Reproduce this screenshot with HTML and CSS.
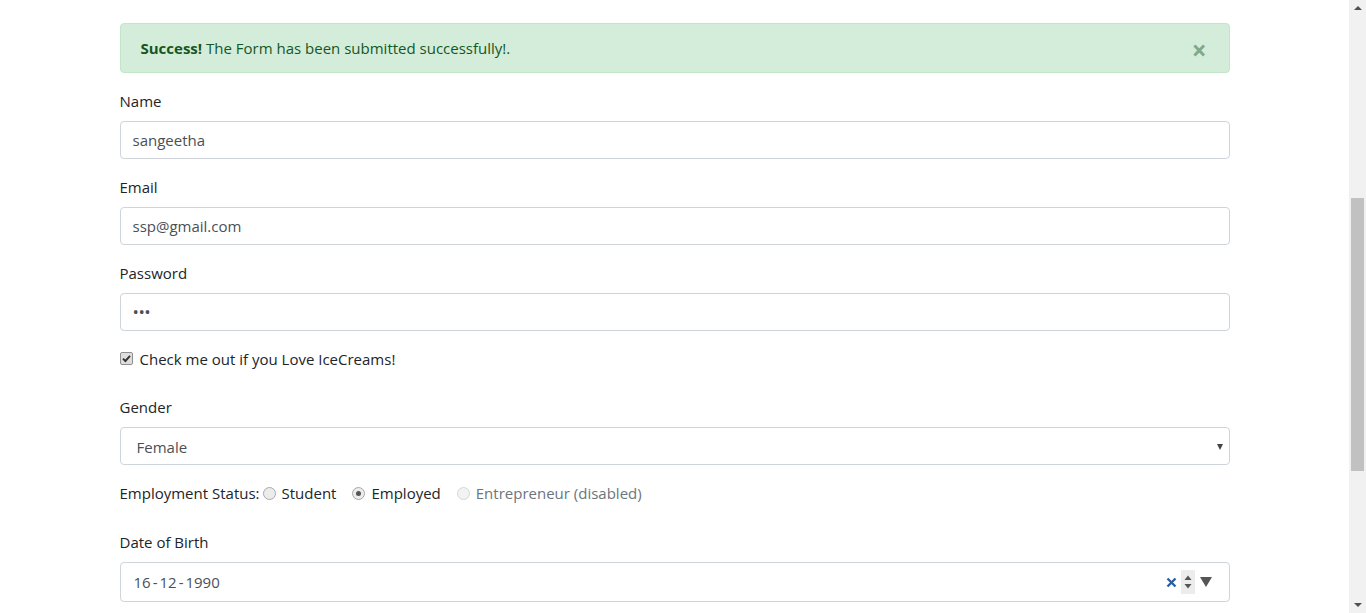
FILE: index.html
```html
<!DOCTYPE html>
<html lang="en">
<head>
<meta charset="utf-8">
<title>Form</title>
<link rel="stylesheet" href="styles.css">
</head>
<body>
<div class="page">
  <div class="container">
    <div class="alert">
      <span><strong>Success!</strong> The Form has been submitted successfully!.</span>
      <span class="close">&times;</span>
    </div>

    <div class="form-group">
      <label class="label">Name</label>
      <div class="input">sangeetha</div>
    </div>
    <div class="form-group">
      <label class="label">Email</label>
      <div class="input">ssp@gmail.com</div>
    </div>
    <div class="form-group">
      <label class="label">Password</label>
      <div class="input dots">&bull;&bull;&bull;</div>
    </div>

    <div class="check-row">
      <span class="checkbox">
        <svg width="9" height="9" viewBox="0 0 9 9"><path d="M1 4.6 L3.4 7 L8 1.8" fill="none" stroke="#333" stroke-width="1.9"/></svg>
      </span>
      <span>Check me out if you Love IceCreams!</span>
    </div>

    <div class="form-group">
      <label class="label">Gender</label>
      <div class="input select"><span>Female</span><span class="caret"></span></div>
    </div>

    <div class="radio-row">
      <span class="radio-label">Employment Status:</span>
      <span class="radio-item"><span class="radio"></span><span>Student</span></span>
      <span class="radio-item"><span class="radio checked"></span><span>Employed</span></span>
      <span class="radio-item disabled"><span class="radio"></span><span>Entrepreneur (disabled)</span></span>
    </div>

    <div class="form-group">
      <label class="label">Date of Birth</label>
      <div class="input date">
        <span>16<span class="sep">-</span>12<span class="sep">-</span>1990</span>
        <span class="date-tools">
          <svg class="clear" width="11" height="11" viewBox="0 0 11 11"><path d="M1.5 1.5 L9.5 9.5 M9.5 1.5 L1.5 9.5" stroke="#2f5fa3" stroke-width="2.4"/></svg>
          <span class="spin">
            <svg width="8" height="5" viewBox="0 0 8 5"><path d="M0.5 5 L4 0.5 L7.5 5 Z" fill="#555"/></svg>
            <svg width="8" height="5" viewBox="0 0 8 5"><path d="M0.5 0 L4 4.5 L7.5 0 Z" fill="#555"/></svg>
          </span>
          <svg class="drop" width="12" height="10" viewBox="0 0 12 10"><path d="M0 0 L12 0 L6 10 Z" fill="#555"/></svg>
        </span>
      </div>
    </div>
  </div>
</div>

<div class="scrollbar">
  <span class="arrow up"></span>
  <span class="thumb"></span>
  <span class="arrow down"></span>
</div>
</body>
</html>
```

FILE: styles.css
```css
html, body {
  margin: 0;
  padding: 0;
  height: 100%;
  overflow: hidden;
}
body {
  font-family: "Open Sans", "Noto Sans", sans-serif;
  font-size: 15px;
  line-height: 24px;
  color: #212529;
  background: #fff;
}
.page {
  margin-right: 17px;
  padding-top: 23px;
}
.container {
  width: 1110px;
  margin: 0 auto;
}
.alert {
  display: flex;
  justify-content: space-between;
  align-items: center;
  height: 48px;
  padding: 0 20px;
  border: 1px solid #c3e6cb;
  border-radius: 4px;
  background: #d4edda;
  color: #155724;
  margin-bottom: 16px;
}
.alert strong { font-weight: 700; }
.close {
  font-size: 26px;
  font-weight: 700;
  color: #80a98b;
  margin-right: 2px;
  padding-top: 4px;
}
.form-group {
  margin-bottom: 16px;
}
.label {
  display: block;
  margin-bottom: 8px;
}
.input {
  box-sizing: border-box;
  height: 38px;
  border: 1px solid #ced4da;
  border-radius: 4px;
  padding: 0 12px;
  display: flex;
  align-items: center;
  color: #495057;
}
.dots {
  font-size: 17px;
  letter-spacing: -0.5px;
}
.check-row {
  display: flex;
  align-items: center;
  height: 24px;
  margin-bottom: 24px;
}
.checkbox {
  box-sizing: border-box;
  width: 13px;
  height: 13px;
  border: 1px solid #8f8f8f;
  border-radius: 2px;
  background: #dedede;
  display: flex;
  align-items: center;
  justify-content: center;
  margin-right: 7px;
  margin-top: -2px;
}
.select {
  justify-content: space-between;
  padding-left: 16px;
  padding-right: 6px;
  padding-top: 1px;
}
.caret {
  width: 0;
  height: 0;
  border-left: 3.5px solid transparent;
  border-right: 3.5px solid transparent;
  border-top: 6px solid #444;
}
.radio-row {
  display: flex;
  align-items: center;
  height: 24px;
  margin-bottom: 25px;
}
.radio-label { margin-right: 3px; }
.radio-item {
  display: flex;
  align-items: center;
  margin-right: 16px;
}
.radio {
  box-sizing: border-box;
  width: 13px;
  height: 13px;
  border-radius: 50%;
  border: 1px solid #a8a8a8;
  background: #ececec;
  margin-right: 6px;
  display: flex;
  align-items: center;
  justify-content: center;
}
.radio.checked::after {
  content: "";
  width: 5px;
  height: 5px;
  border-radius: 50%;
  background: #555;
}
.disabled { color: #6c757d; }
.disabled .radio {
  border-color: #d6d6d6;
  background: #f3f3f3;
}
.date {
  height: 40px;
  justify-content: space-between;
  padding-left: 13px;
  padding-right: 17px;
}
.sep { margin: 0 2px; }
.date-tools {
  display: flex;
  align-items: center;
}
.clear { margin-right: 4px; }
.spin {
  display: flex;
  flex-direction: column;
  align-items: center;
  justify-content: center;
  gap: 4px;
  width: 14px;
  height: 24px;
  background: #ececec;
  margin-right: 5px;
}
.scrollbar {
  position: fixed;
  top: 0;
  right: 0;
  width: 17px;
  height: 100%;
  background: #f1f1f1;
}
.thumb {
  position: absolute;
  left: 2px;
  top: 198px;
  width: 13px;
  height: 273px;
  background: #c1c1c1;
}
.arrow {
  position: absolute;
  left: 5px;
  width: 0;
  height: 0;
  border-left: 4px solid transparent;
  border-right: 4px solid transparent;
}
.arrow.up { top: 6px; border-bottom: 4px solid #505050; }
.arrow.down { bottom: 6px; border-top: 4px solid #505050; }
```
